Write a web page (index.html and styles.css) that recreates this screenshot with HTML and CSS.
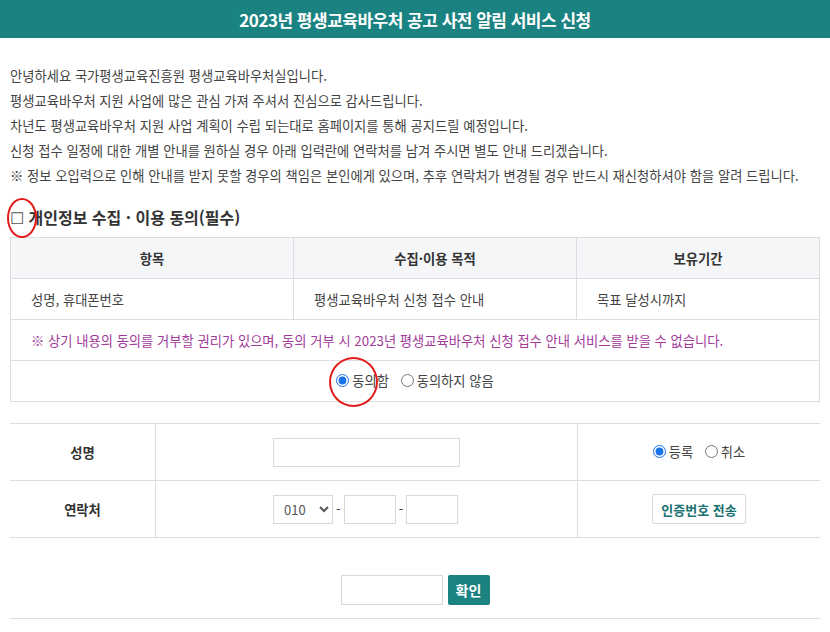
FILE: index.html
```html
<!DOCTYPE html>
<html lang="ko">
<head>
  <meta charset="UTF-8">
  <title>2023년 평생교육바우처 공고 사전 알림 서비스 신청</title>
  <link rel="stylesheet" href="styles.css">
</head>
<body>

  <!-- Title bar -->
  <header class="top-bar">
    <h1>2023년 평생교육바우처 공고 사전 알림 서비스 신청</h1>
  </header>

  <main class="content">
    <!-- Intro -->
    <div class="intro">
      <p>안녕하세요 국가평생교육진흥원 평생교육바우처실입니다.</p>
      <p>평생교육바우처 지원 사업에 많은 관심 가져 주셔서 진심으로 감사드립니다.</p>
      <p>차년도 평생교육바우처 지원 사업 계획이 수립 되는대로 홈페이지를 통해 공지드릴 예정입니다.</p>
      <p>신청 접수 일정에 대한 개별 안내를 원하실 경우 아래 입력란에 연락처를 남겨 주시면 별도 안내 드리겠습니다.</p>
      <p>※ 정보 오입력으로 인해 안내를 받지 못할 경우의 책임은 본인에게 있으며, 추후 연락처가 변경될 경우 반드시 재신청하셔야 함을 알려 드립니다.</p>
    </div>

    <!-- Consent -->
    <h2 class="consent-title">
      <span class="mark mark-box"></span><span class="box">☐</span> 개인정보 수집 · 이용 동의(필수)
    </h2>
    <table class="consent-table">
      <thead>
        <tr>
          <th>항목</th>
          <th>수집·이용 목적</th>
          <th>보유기간</th>
        </tr>
      </thead>
      <tbody>
        <tr>
          <td>성명, 휴대폰번호</td>
          <td>평생교육바우처 신청 접수 안내</td>
          <td>목표 달성시까지</td>
        </tr>
        <tr>
          <td colspan="3" class="notice">※ 상기 내용의 동의를 거부할 권리가 있으며, 동의 거부 시 2023년 평생교육바우처 신청 접수 안내 서비스를 받을 수 없습니다.</td>
        </tr>
        <tr>
          <td colspan="3" class="agree-cell">
            <label class="radio agree-yes"><span class="mark mark-radio"></span><input type="radio" name="agree" checked> 동의함</label>
            <label class="radio"><input type="radio" name="agree"> 동의하지 않음</label>
          </td>
        </tr>
      </tbody>
    </table>

    <!-- Apply form -->
    <table class="form-table">
      <tr>
        <th>성명</th>
        <td class="field"><input type="text" class="name-input"></td>
        <td class="side">
          <label class="radio"><input type="radio" name="mode" checked> 등록</label>
          <label class="radio"><input type="radio" name="mode"> 취소</label>
        </td>
      </tr>
      <tr>
        <th>연락처</th>
        <td class="field">
          <div class="phone">
            <select class="phone-select">
              <option>010</option>
              <option>011</option>
              <option>016</option>
            </select>
            <span>-</span>
            <input type="text" class="phone-input">
            <span>-</span>
            <input type="text" class="phone-input">
          </div>
        </td>
        <td class="side"><button type="button" class="btn-send">인증번호 전송</button></td>
      </tr>
    </table>

    <div class="confirm">
      <input type="text" class="code-input">
      <button type="button" class="btn-ok">확인</button>
    </div>
  </main>

</body>
</html>
```

FILE: styles.css
```css
body {
  font-family: "Noto Sans CJK KR", "Noto Sans", sans-serif;
  color: #444;
  background-color: white;
  margin: 0;
  padding: 0;
}

.top-bar {
  background-color: #1b8282;
  color: white;
  height: 38px;
  display: flex;
  align-items: center;
  justify-content: center;
}

.top-bar h1 {
  margin: 0;
  font-size: 17px;
  font-weight: bold;
  letter-spacing: -0.5px;
}

.content {
  padding: 0 10px;
}

.intro {
  padding-top: 25px;
}

.intro p {
  margin: 0;
  font-size: 13.3px;
  line-height: 25px;
}

.consent-title {
  position: relative;
  margin: 19px 0 10px;
  font-size: 16px;
  font-weight: bold;
  color: #333;
  line-height: 20px;
}

.consent-title .box {
  font-weight: normal;
  color: #555;
}

table {
  width: 100%;
  border-collapse: collapse;
  font-size: 13.3px;
}

.consent-table th,
.consent-table td {
  border: 1px solid #dcdde2;
  height: 40px;
  padding: 0 20px;
  text-align: left;
}

.consent-table th {
  background-color: #f5f6f8;
  text-align: center;
  font-weight: bold;
  color: #333;
}

.consent-table th:nth-child(1),
.consent-table td:nth-child(1) {
  width: 242px;
}

.consent-table th:nth-child(3) {
  width: 202px;
}

.consent-table .notice {
  color: #a23b9a;
  padding-left: 20px;
}

.consent-table .agree-cell {
  text-align: center;
}

.radio {
  position: relative;
  display: inline-flex;
  align-items: center;
  margin: 0 4px;
}

.radio input {
  width: 13px;
  height: 13px;
  margin: 0 3px 0 0;
  accent-color: #1a73e8;
}

.form-table {
  margin-top: 21px;
}

.form-table th,
.form-table td {
  border-top: 1px solid #dcdde2;
  border-bottom: 1px solid #dcdde2;
  height: 56px;
  padding: 0;
}

.form-table th {
  width: 145px;
  border-right: 1px solid #dcdde2;
  font-weight: bold;
  color: #333;
}

.form-table .field {
  padding-left: 117px;
}

.form-table .side {
  width: 242px;
  border-left: 1px solid #dcdde2;
  text-align: center;
}

input[type="text"],
select {
  border: 1px solid #d8d9dc;
  height: 29px;
  box-sizing: border-box;
  font-family: inherit;
  vertical-align: middle;
}

.name-input {
  width: 187px;
}

.phone {
  display: flex;
  align-items: center;
  gap: 3px;
}

.phone-select {
  width: 60px;
  padding: 0 6px;
  font-size: 13px;
  color: #555;
  background: white;
}

.phone-input {
  width: 52px;
}

.btn-send {
  background-color: white;
  border: 1px solid #d8d9dc;
  border-radius: 2px;
  color: #1b7171;
  font-family: inherit;
  font-weight: bold;
  font-size: 13px;
  height: 30px;
  padding: 0 8px;
  vertical-align: middle;
}

.confirm {
  display: flex;
  justify-content: center;
  gap: 5px;
  padding: 37px 0 13px;
  border-bottom: 1px solid #dcdde2;
}

.code-input {
  width: 102px;
  height: 30px !important;
}

.btn-ok {
  background-color: #1b8282;
  color: white;
  border: none;
  border-radius: 2px;
  font-family: inherit;
  font-weight: bold;
  font-size: 14px;
  width: 42px;
  height: 30px;
}

/* red annotation circles drawn over the page */
.mark {
  position: absolute;
  border: 2px solid #e31b1b;
  border-radius: 50%;
  pointer-events: none;
}

.mark-box {
  left: -3px;
  top: -9px;
  width: 26px;
  height: 36px;
}

.mark-radio {
  left: -7px;
  top: -14px;
  width: 45px;
  height: 46px;
}
```
